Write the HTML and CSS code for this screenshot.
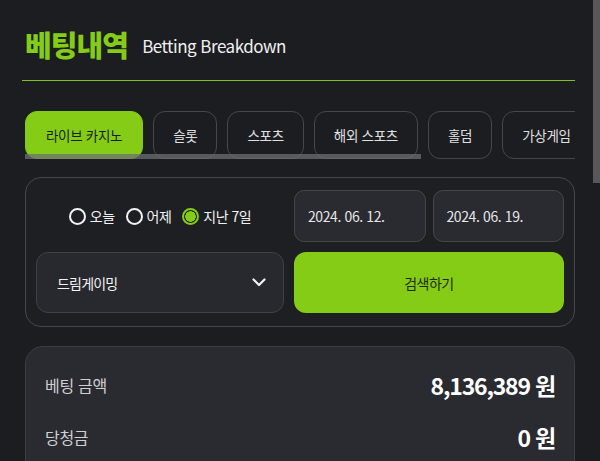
FILE: index.html
```html
<!DOCTYPE html>
<html lang="ko">
<head>
  <meta charset="UTF-8">
  <meta name="viewport" content="width=device-width, initial-scale=1.0">
  <title>베팅내역</title>
  <link rel="stylesheet" href="styles.css">
</head>
<body>

  <div class="page">
    <div class="head">
      <h1>베팅내역</h1>
      <span class="sub">Betting Breakdown</span>
    </div>

    <div class="tabs-wrap">
      <div class="tabs">
        <button class="tab active">라이브 카지노</button>
        <button class="tab">슬롯</button>
        <button class="tab">스포츠</button>
        <button class="tab">해외 스포츠</button>
        <button class="tab">홀덤</button>
        <button class="tab">가상게임</button>
        <button class="tab">미니게임</button>
      </div>
      <div class="tabs-thumb"></div>
    </div>

    <div class="filter">
      <div class="periods">
        <label class="radio"><span class="dot"></span>오늘</label>
        <label class="radio"><span class="dot"></span>어제</label>
        <label class="radio on"><span class="dot"></span>지난 7일</label>
      </div>
      <div class="dates">
        <div class="date">2024. 06. 12.</div>
        <div class="date">2024. 06. 19.</div>
      </div>
      <div class="select">
        <span>드림게이밍</span>
        <svg width="14" height="9" viewBox="0 0 14 9"><path d="M1.5 1.5 L7 7 L12.5 1.5" fill="none" stroke="#f2f2f2" stroke-width="2.2" stroke-linecap="round" stroke-linejoin="round"/></svg>
      </div>
      <button class="search">검색하기</button>
    </div>

    <div class="summary">
      <div class="row">
        <span class="label">베팅 금액</span>
        <span class="value">8,136,389 원</span>
      </div>
      <div class="row">
        <span class="label">당청금</span>
        <span class="value">0 원</span>
      </div>
      <div class="row">
        <span class="label">손익</span>
        <span class="value">-8,136,389 원</span>
      </div>
    </div>
  </div>

  <div class="scroll-thumb"></div>

</body>
</html>
```

FILE: styles.css
```css
body {
  margin: 0;
  background-color: #1c1d21;
  font-family: "Noto Sans CJK KR", "Noto Sans", sans-serif;
  color: #eeeeee;
  height: 461px;
  overflow: hidden;
}
.page {
  padding: 22px 25px 0;
}
.head {
  display: flex;
  align-items: center;
  gap: 14px;
  padding: 0 0 14px 3px;
  border-bottom: 1px solid #7fc31a;
  margin: 0 0 30px -3px;
}
h1 {
  margin: 0;
  font-size: 29px;
  font-weight: 900;
  color: #84cc16;
  letter-spacing: -0.9px;
  line-height: 44px;
}
.sub {
  font-size: 17px;
  color: #f0f0f0;
  letter-spacing: -0.5px;
  padding-top: 2px;
}
.tabs-wrap {
  position: relative;
  overflow: hidden;
}
.tabs {
  display: flex;
  gap: 10px;
}
.tab {
  flex: none;
  height: 48px;
  padding: 0 19px;
  border: 1px solid #46474c;
  border-radius: 12px;
  background: transparent;
  color: #e0e0e0;
  font-family: inherit;
  font-size: 13.5px;
  letter-spacing: -0.3px;
}
.tab.active {
  background-color: #84cc16;
  border-color: #84cc16;
  color: #1c1d21;
  padding: 0 20px;
}
.tabs-thumb {
  position: absolute;
  left: 0;
  bottom: 0;
  width: 396px;
  height: 5px;
  background-color: rgba(110, 110, 114, 0.75);
}
.filter {
  margin-top: 18px;
  border: 1px solid #46474c;
  border-radius: 16px;
  background-color: #1e1f23;
  padding: 12px 10px 13px;
  display: grid;
  grid-template-columns: 248px 1fr;
  grid-template-rows: 52px 61px;
  gap: 10px;
}
.periods {
  display: flex;
  align-items: center;
  justify-content: center;
  gap: 11px;
  font-size: 14px;
  letter-spacing: -0.5px;
}
.radio {
  display: flex;
  align-items: center;
  gap: 4px;
  color: #f2f2f2;
}
.dot {
  width: 13px;
  height: 13px;
  border: 2.5px solid #f2f2f2;
  border-radius: 50%;
  box-sizing: content-box;
}
.radio.on .dot {
  border-color: #84cc16;
  background: radial-gradient(circle, #84cc16 0 5px, transparent 5.5px);
}
.dates {
  display: flex;
  gap: 7px;
}
.date {
  flex: 1;
  display: flex;
  align-items: center;
  padding-left: 13px;
  background-color: #2a2b30;
  border: 1px solid #45464b;
  border-radius: 10px;
  font-size: 14px;
  color: #e6e6e6;
  letter-spacing: -0.4px;
}
.select {
  display: flex;
  align-items: center;
  justify-content: space-between;
  padding: 0 17px 0 20px;
  background-color: #28292e;
  border: 1px solid #404146;
  border-radius: 12px;
  font-size: 14px;
  letter-spacing: -0.8px;
  color: #f2f2f2;
}
.search {
  border: none;
  border-radius: 12px;
  background-color: #84cc16;
  color: #1f2a10;
  font-family: inherit;
  font-size: 14px;
  letter-spacing: -0.5px;
}
.summary {
  margin-top: 19px;
  background-color: #2a2b30;
  border: 1px solid #3c3d42;
  border-radius: 18px;
  padding: 12px 19px;
}
.row {
  display: flex;
  align-items: center;
  justify-content: space-between;
  height: 52px;
}
.label {
  font-size: 16px;
  color: #d0d0d0;
  letter-spacing: -0.3px;
}
.value {
  font-size: 23px;
  font-weight: 700;
  color: #ffffff;
  letter-spacing: -1.2px;
}
.scroll-thumb {
  position: fixed;
  top: 0;
  right: 0;
  width: 7px;
  height: 183px;
  background-color: #58585b;
}
```
